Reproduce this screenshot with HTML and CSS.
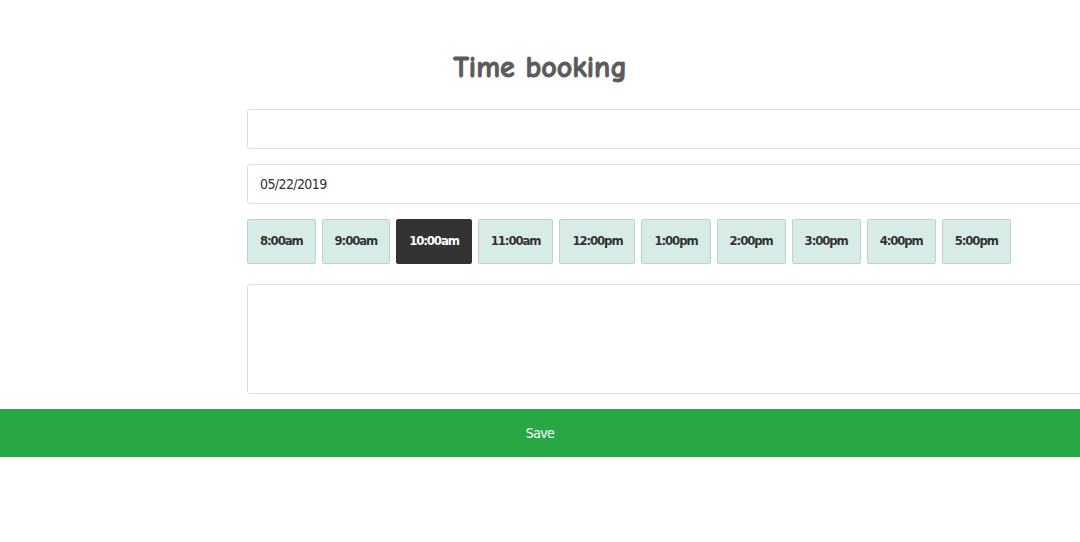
FILE: index.html
```html
<!DOCTYPE html>
<html>
<head>
<meta charset="utf-8">
<link rel="stylesheet" href="styles.css">
</head>
<body>
<h1 class="title">Time booking</h1>
<div class="form">
  <input class="field" type="text" value="">
  <input class="field date" type="text" value="05/22/2019">
  <div class="slots">
    <button class="slot">8:00am</button>
    <button class="slot">9:00am</button>
    <button class="slot active">10:00am</button>
    <button class="slot">11:00am</button>
    <button class="slot">12:00pm</button>
    <button class="slot">1:00pm</button>
    <button class="slot">2:00pm</button>
    <button class="slot">3:00pm</button>
    <button class="slot">4:00pm</button>
    <button class="slot">5:00pm</button>
  </div>
  <textarea class="notes"></textarea>
</div>
<button class="save">Save</button>
</body>
</html>
```
FILE: styles.css
```css
html, body {
  margin: 0;
  padding: 0;
  overflow: hidden;
  background: #fff;
}
body {
  font-family: "DejaVu Sans Condensed", sans-serif;
  color: #333;
}
.title {
  margin: 0;
  padding-top: 52px;
  padding-bottom: 25px;
  text-align: center;
  font-family: "Comic Neue", "DejaVu Sans", sans-serif;
  font-weight: bold;
  font-size: 30px;
  line-height: 32px;
  color: #5b5b5b;
  -webkit-text-stroke: 0.9px #5b5b5b;
}
.form {
  margin-left: 247px;
  width: 950px;
  display: flex;
  flex-direction: column;
}
.field {
  display: block;
  box-sizing: border-box;
  width: 100%;
  height: 40px;
  margin: 0 0 15px 0;
  padding: 0 12px;
  border: 1px solid #dcdcdc;
  border-radius: 3px;
  font-family: "DejaVu Sans Condensed", sans-serif;
  font-size: 14px;
  letter-spacing: -0.6px;
  color: #333;
  outline: none;
}
.slots {
  display: flex;
  gap: 6px;
  margin-bottom: 20px;
}
.slot {
  height: 45px;
  box-sizing: border-box;
  padding: 0 12px 3px;
  background: #d8ece7;
  border: 1px solid #bcd3cd;
  border-radius: 2px;
  font-family: "DejaVu Sans Condensed", sans-serif;
  font-weight: bold;
  font-size: 13px;
  letter-spacing: -1.1px;
  color: #333;
}
.slot.active {
  background: #333;
  border-color: #333;
  color: #fff;
}
.notes {
  display: block;
  box-sizing: border-box;
  width: 100%;
  height: 110px;
  margin: 0 0 15px 0;
  border: 1px solid #dcdcdc;
  border-radius: 3px;
  resize: none;
  outline: none;
}
.save {
  display: block;
  width: 100%;
  height: 48px;
  margin: 0;
  border: none;
  background: #28a745;
  color: #fff;
  font-family: "DejaVu Sans Condensed", sans-serif;
  font-size: 14px;
  letter-spacing: -0.6px;
}
```
